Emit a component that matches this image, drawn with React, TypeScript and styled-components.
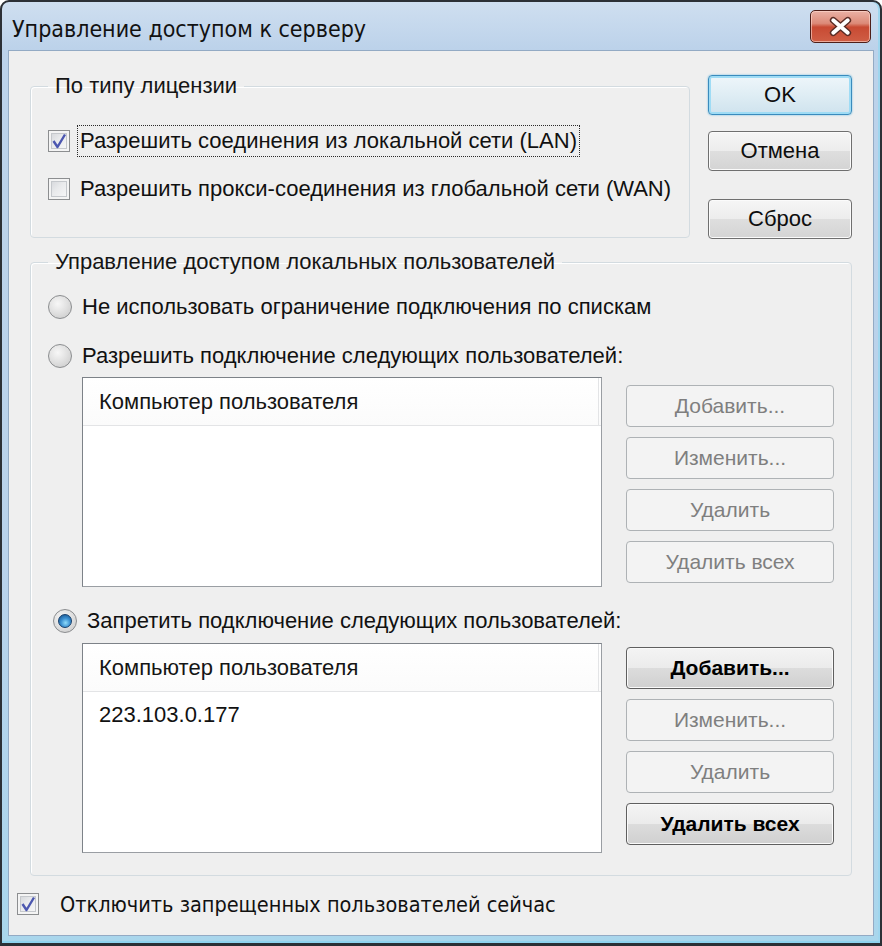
import React, { FC } from "react";
import styled, { createGlobalStyle, css } from "styled-components";

const GlobalStyle = createGlobalStyle`
  html, body {
    margin: 0;
    padding: 0;
    background: #ffffff;
  }
  body {
    font-family: "Liberation Sans", Arial, sans-serif;
  }
`;

type ListProps = {
  items: string[];
};

const ListView: FC<ListProps> = ({ items }) => (
  <ListBox>
    <ListHeader>
      <HeaderCell>Компьютер пользователя</HeaderCell>
    </ListHeader>
    {items.map((item) => (
      <ListItem key={item}>{item}</ListItem>
    ))}
  </ListBox>
);

const CheckMark = () => (
  <svg width="22" height="22" viewBox="0 0 22 22">
    <path
      d="M5.5 11 L9.5 17 L17 4.5"
      fill="none"
      stroke="#4c57b0"
      strokeWidth="2.4"
      strokeLinejoin="round"
    />
  </svg>
);

const CloseGlyph = () => (
  <svg width="61" height="33" viewBox="0 0 61 33">
    <g strokeLinecap="round">
      <path d="M23 10 L38 23 M38 10 L23 23" stroke="#5a2c25" strokeWidth="7" />
      <path d="M23 10 L38 23 M38 10 L23 23" stroke="#ffffff" strokeWidth="4" />
    </g>
  </svg>
);

type SideButtonsProps = {
  offset: number;
  strong?: boolean;
};

const SideButtons: FC<SideButtonsProps> = ({ offset, strong }) => (
  <SideColumn $offset={offset}>
    <SideButton $enabled={strong}>Добавить...</SideButton>
    <SideButton>Изменить...</SideButton>
    <SideButton>Удалить</SideButton>
    <SideButton $enabled={strong}>Удалить всех</SideButton>
  </SideColumn>
);

const App: FC = () => {
  return (
    <>
      <GlobalStyle />
      <Window>
        <TitleBar>
          <Title>Управление доступом к серверу</Title>
          <CloseButton>
            <CloseGlyph />
          </CloseButton>
        </TitleBar>

        <Client>
          <TopRow>
            <Group $width={660} $bottom={30}>
              <Legend>По типу лицензии</Legend>
              <Options $top={24} $gap={12}>
                <Option>
                  <CheckBox>
                    <CheckMark />
                  </CheckBox>
                  <Label $focused>Разрешить соединения из локальной сети (LAN)</Label>
                </Option>
                <Option>
                  <CheckBox />
                  <Label>Разрешить прокси-соединения из глобальной сети (WAN)</Label>
                </Option>
              </Options>
            </Group>

            <DialogButtons>
              <DialogButton $default>OK</DialogButton>
              <DialogButton>Отмена</DialogButton>
              <DialogButton $spaced>Сброс</DialogButton>
            </DialogButtons>
          </TopRow>

          <Group $bottom={22}>
            <Legend>Управление доступом локальных пользователей</Legend>
            <Options $top={14} $gap={13}>
              <Option>
                <Radio />
                <Label>Не использовать ограничение подключения по спискам</Label>
              </Option>
              <Option>
                <Radio />
                <Label>Разрешить подключение следующих пользователей:</Label>
              </Option>
            </Options>

            <ListSection $top={3}>
              <ListView items={[]} />
              <SideButtons offset={8} />
            </ListSection>

            <Options $top={16} $gap={0}>
              <Option $indent={5}>
                <Radio $checked />
                <Label>Запретить подключение следующих пользователей:</Label>
              </Option>
            </Options>

            <ListSection $top={4}>
              <ListView items={["223.103.0.177"]} />
              <SideButtons offset={4} strong />
            </ListSection>
          </Group>

          <BottomOption>
            <CheckBox>
              <CheckMark />
            </CheckBox>
            <BottomLabel>Отключить запрещенных пользователей сейчас</BottomLabel>
          </BottomOption>
        </Client>
      </Window>
    </>
  );
};

export default App;

const Window = styled.div`
  box-sizing: border-box;
  width: 882px;
  height: 946px;
  display: flex;
  flex-direction: column;
  padding: 0 6px 7px 6px;
  border: 2px solid #2c3036;
  border-bottom-width: 3px;
  border-radius: 9px 9px 0 0;
  background: linear-gradient(180deg, #cfdff0 0%, #bcd2ea 5%, #b9d2eb 60%, #a9d6ec 100%);
  box-shadow: inset 0 -2px 0 #8fd3ef, inset -2px 0 0 #9fd6ee;
  overflow: hidden;
`;

const TitleBar = styled.div`
  height: 48px;
  display: flex;
  justify-content: space-between;
  align-items: flex-start;
  padding-left: 4px;
`;

const Title = styled.div`
  margin-top: 12px;
  font-family: "DejaVu Sans Condensed", "Liberation Sans", sans-serif;
  font-size: 23px;
  line-height: 30px;
  color: #121212;
`;

const CloseButton = styled.div`
  box-sizing: border-box;
  width: 61px;
  height: 33px;
  margin-top: 8px;
  margin-right: 3px;
  border: 1px solid #4e1f19;
  border-radius: 5px;
  background: linear-gradient(180deg, #eab1a5 0%, #dc8a78 40%, #c84a33 52%, #cf5e45 100%);
  box-shadow: inset 0 0 0 1px rgba(255, 220, 210, 0.6);
  display: flex;
  align-items: center;
  justify-content: center;

  svg {
    display: block;
  }
`;

const Client = styled.div`
  flex: 1;
  display: flex;
  flex-direction: column;
  padding: 22px 21px 0 8px;
  background: #efefef;
  border: 1px solid #93aac4;
`;

const TopRow = styled.div`
  display: flex;
  align-items: flex-start;
  margin-left: 13px;
`;

const Group = styled.fieldset<{ $width?: number; $bottom: number }>`
  box-sizing: border-box;
  margin: 0 0 0 ${(p) => (p.$width ? 0 : 13)}px;
  padding: 0 0 ${(p) => p.$bottom}px 17px;
  min-width: 0;
  ${(p) =>
    p.$width
      ? css`
          width: ${p.$width}px;
        `
      : css`
          margin-top: 10px;
        `}
  border: 1px solid #d3dbe0;
  border-radius: 4px;
  box-shadow: 1px 1px 0 #ffffff inset;
`;

const Legend = styled.legend`
  padding: 0 7px;
  font-size: 22px;
  line-height: 26px;
  color: #151515;
`;

const Options = styled.div<{ $top: number; $gap: number }>`
  display: flex;
  flex-direction: column;
  gap: ${(p) => p.$gap}px;
  margin-top: ${(p) => p.$top}px;
`;

const Option = styled.div<{ $indent?: number }>`
  height: 36px;
  display: flex;
  align-items: center;
  gap: 10px;
  padding-left: ${(p) => p.$indent || 0}px;
`;

const CheckBox = styled.div`
  box-sizing: border-box;
  width: 22px;
  height: 22px;
  flex: none;
  border: 1px solid #8c8e90;
  background: linear-gradient(135deg, #cfd2d6 0%, #e9eaec 45%, #fafafa 100%);
  box-shadow: inset 0 0 0 2px #f4f4f4, inset 0 0 0 3px #c5c8cc;
  position: relative;

  svg {
    position: absolute;
    left: -1px;
    top: -1px;
  }
`;

const Radio = styled.div<{ $checked?: boolean }>`
  box-sizing: border-box;
  width: 24px;
  height: 24px;
  flex: none;
  border-radius: 50%;
  border: 1px solid #8b8d8f;
  background: radial-gradient(circle at 40% 35%, #f7f7f7 0%, #e2e2e2 45%, #c6c6c6 100%);
  display: flex;
  align-items: center;
  justify-content: center;

  &::after {
    content: "";
    display: ${(p) => (p.$checked ? "block" : "none")};
    width: 12px;
    height: 12px;
    border-radius: 50%;
    border: 1px solid #163f6b;
    background: radial-gradient(circle at 55% 65%, #8fdcfb 0%, #3a8fd0 45%, #11487f 100%);
  }
`;

const Label = styled.span<{ $focused?: boolean }>`
  font-size: 22px;
  line-height: 26px;
  color: #111111;
  white-space: nowrap;
  padding: 2px 2px;
  margin-left: -2px;
  outline: ${(p) => (p.$focused ? "1px dotted #2a2a2a" : "none")};
`;

const DialogButtons = styled.div`
  display: flex;
  flex-direction: column;
  gap: 16px;
  margin: 2px 0 0 18px;
  width: 144px;
`;

const DialogButton = styled.div<{ $default?: boolean; $spaced?: boolean }>`
  box-sizing: border-box;
  height: 40px;
  display: flex;
  align-items: center;
  justify-content: center;
  border-radius: 4px;
  font-size: 22px;
  color: #0e0e0e;
  margin-top: ${(p) => (p.$spaced ? 12 : 0)}px;
  border: 1px solid ${(p) => (p.$default ? "#3a8bbd" : "#6f6f6f")};
  background: ${(p) =>
    p.$default
      ? "linear-gradient(180deg, #eef6fa 0%, #dfedf4 50%, #cfe3ee 100%)"
      : "linear-gradient(180deg, #f6f6f6 0%, #ececec 50%, #dedede 51%, #d4d4d4 100%)"};
  box-shadow: ${(p) =>
    p.$default ? "inset 0 0 0 2px #9fdcf5, 0 0 2px #5fb6e0" : "inset 0 0 0 1px #fbfbfb"};
`;

const ListSection = styled.div<{ $top: number }>`
  display: flex;
  align-items: flex-start;
  margin: ${(p) => p.$top}px 0 0 34px;
`;

const ListBox = styled.div`
  box-sizing: border-box;
  width: 520px;
  height: 210px;
  flex: none;
  background: #ffffff;
  border: 1px solid #7d8288;
  border-right-color: #9a9ea3;
  border-bottom-color: #9a9ea3;
`;

const ListHeader = styled.div`
  height: 47px;
  display: flex;
  background: linear-gradient(180deg, #ffffff 0%, #fbfbfb 100%);
  border-bottom: 1px solid #e3e4e6;
`;

const HeaderCell = styled.div`
  flex: 1;
  margin-right: 2px;
  display: flex;
  align-items: center;
  padding-left: 16px;
  border-right: 1px solid #e3e4e6;
  font-size: 22px;
  color: #151515;
`;

const ListItem = styled.div`
  height: 46px;
  display: flex;
  align-items: center;
  padding-left: 16px;
  font-size: 22px;
  color: #111111;
`;

const SideColumn = styled.div<{ $offset: number }>`
  display: flex;
  flex-direction: column;
  gap: 10px;
  width: 208px;
  margin-left: 24px;
  padding-top: ${(p) => p.$offset}px;
`;

const SideButton = styled.div<{ $enabled?: boolean }>`
  box-sizing: border-box;
  height: 42px;
  display: flex;
  align-items: center;
  justify-content: center;
  border-radius: 4px;
  font-size: 21px;
  ${(p) =>
    p.$enabled
      ? css`
          color: #000000;
          font-weight: 700;
          border: 1px solid #5f5f5f;
          background: linear-gradient(180deg, #f4f4f4 0%, #ebebeb 50%, #dcdcdc 51%, #d0d0d0 100%);
          box-shadow: inset 0 0 0 1px #fafafa;
        `
      : css`
          color: #7f7f7f;
          border: 1px solid #aeb2b5;
          background: #f3f3f3;
        `}
`;

const BottomOption = styled.div`
  height: 36px;
  display: flex;
  align-items: center;
  gap: 21px;
  margin-top: 10px;
`;

const BottomLabel = styled.span`
  font-family: "DejaVu Sans Condensed", "Liberation Sans", sans-serif;
  font-size: 21.5px;
  color: #111111;
  white-space: nowrap;
`;
